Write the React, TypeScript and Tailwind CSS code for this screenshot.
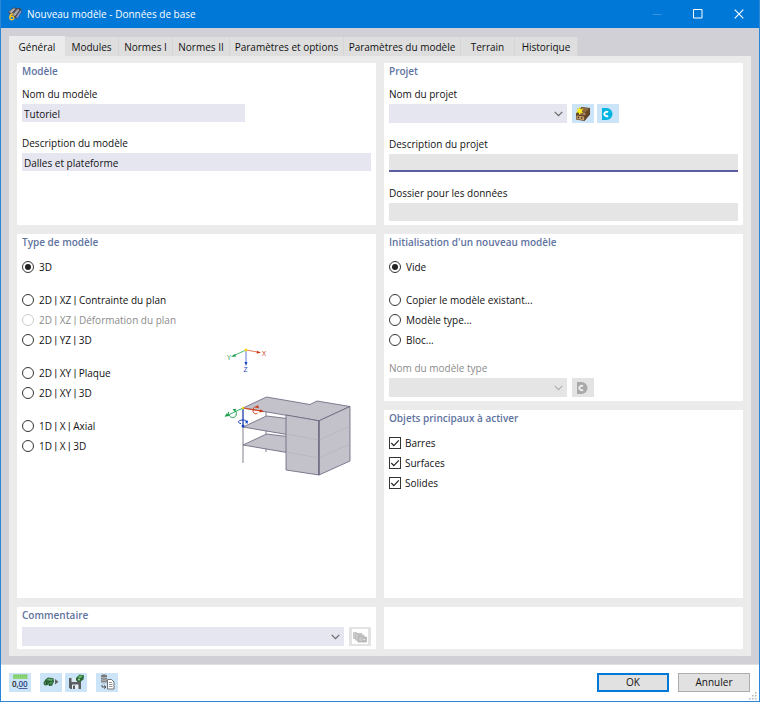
import React from "react";

type Option = { label: string; disabled?: boolean; checked?: boolean };

const tabs = [
  { label: "Général", className: "w-14" },
  { label: "Modules", className: "w-[54px]" },
  { label: "Normes I", className: "w-[54px]" },
  { label: "Normes II", className: "w-[57px]" },
  { label: "Paramètres et options", className: "w-[114px]" },
  { label: "Paramètres du modèle", className: "w-[117px]" },
  { label: "Terrain", className: "w-[54px]" },
  { label: "Historique", className: "w-[63px]" },
];

const modelTypes: Option[][] = [
  [{ label: "3D", checked: true }],
  [
    { label: "2D | XZ | Contrainte du plan" },
    { label: "2D | XZ | Déformation du plan", disabled: true },
    { label: "2D | YZ | 3D" },
  ],
  [{ label: "2D | XY | Plaque" }, { label: "2D | XY | 3D" }],
  [{ label: "1D | X | Axial" }, { label: "1D | X | 3D" }],
];

const initTypes: Option[][] = [
  [{ label: "Vide", checked: true }],
  [{ label: "Copier le modèle existant..." }, { label: "Modèle type..." }, { label: "Bloc..." }],
];

function Card({ title, className = "", children }: { title?: string; className?: string; children?: React.ReactNode }) {
  return (
    <section className={`bg-white px-[5px] ${className}`}>
      {title && <h2 className="mb-[7px] font-semibold leading-4 text-[#5f73a0]">{title}</h2>}
      {children}
    </section>
  );
}

// Roboto has a narrow bar, Open Sans a very wide one
function OptionLabel({ text }: { text: string }) {
  return (
    <span>
      {text.split("|").map((part, index) => (
        <React.Fragment key={index}>
          {index > 0 && <span className="font-['Roboto',sans-serif]">|</span>}
          {part}
        </React.Fragment>
      ))}
    </span>
  );
}

function RadioGroup({ name, groups }: { name: string; groups: Option[][] }) {
  return (
    <div className="flex flex-col gap-[13px]">
      {groups.map((group, index) => (
        <div key={index} className="flex flex-col">
          {group.map((option) => (
            <label
              key={option.label}
              className={`flex h-5 items-center gap-[5px] whitespace-nowrap ${option.disabled ? "text-[#8c8c8c]" : ""}`}
            >
              <input
                type="radio"
                name={name}
                defaultChecked={option.checked}
                disabled={option.disabled}
                className="grid size-3 shrink-0 appearance-none place-items-center rounded-full border border-[#333] bg-white before:size-1.5 before:rounded-full checked:before:bg-[#222] disabled:border-[#ccc]"
              />
              <OptionLabel text={option.label} />
            </label>
          ))}
        </div>
      ))}
    </div>
  );
}

function Combo({ id, label, className = "", disabled }: { id: string; label?: string; className?: string; disabled?: boolean }) {
  return (
    <div className={`relative ${className}`}>
      <select
        id={id}
        aria-label={label}
        disabled={disabled}
        className="block h-[19px] w-full appearance-none bg-[#e6e6f1] px-0.5 outline-none disabled:bg-[#e5e5e5] disabled:opacity-100"
      >
        <option></option>
      </select>
      <svg
        viewBox="0 0 9 6"
        className={`pointer-events-none absolute right-1 top-[7px] h-1.5 w-[9px] ${disabled ? "text-[#b0b0b0]" : "text-[#666]"}`}
      >
        <path d="M.7 .8 4.5 4.6 8.3 .8" fill="none" stroke="currentColor" strokeWidth="1.2" />
      </svg>
    </div>
  );
}

function IconButton({ label, className = "bg-[#cce4f7]", disabled, children }: { label: string; className?: string; disabled?: boolean; children: React.ReactNode }) {
  return (
    <button
      type="button"
      aria-label={label}
      disabled={disabled}
      className={`flex h-[19px] w-[22px] shrink-0 items-center justify-center ${className}`}
    >
      {children}
    </button>
  );
}

function DlubalIcon({ color, notch }: { color: string; notch: string }) {
  return (
    <svg viewBox="0 0 16 16" className="size-4">
      <path d="M2 2H6.500a6 6 0 0 1 0 12H2Z" fill={color} />
      <path d="M8 6.300A2.200 2.200 0 1 0 8 9.700" fill="none" stroke={notch} strokeWidth="1.800" />
    </svg>
  );
}

function AppIcon() {
  return (
    <svg viewBox="0 0 14 14" className="size-3.5">
      <path d="M0 5 5.500 .5l7 .8L14 4.500 9.500 11.500 5 11Z" fill="#4c4a50" />
      <path d="M.8 5 5.500 1.200l2 .5-4 4.500ZM4.500 8l5-6 1.700.4-4.700 6.400Z" fill="#9ca2b1" />
      <path d="m8 10 4.300-6.500 1.200 1L9.500 11.200Z" fill="#7f96c8" />
      <path d="m2.500 6 4-4M6.500 9l4.200-5.800" stroke="#d9cdb8" strokeWidth=".7" />
      <path d="M5.300 7.200C3 6.500 1.700 8.200 1.800 10.500c.1 3 4 2.800 4 .4 0-1.900-2.600-2.200-3.800-.6" fill="none" stroke="#f3c32a" strokeWidth="1.400" />
    </svg>
  );
}

function ProjectIcon() {
  return (
    <svg viewBox="0 0 16 16" className="size-4">
      <path d="M1 7.500 6.500 1l8.500 1v6.500L9.500 15 1 13.500Z" fill="#5a4029" />
      <path d="m6.500 1.600 7.800.8L11 6 4.500 5Z" fill="#8d6c43" />
      <path d="m11 6.500 3.500-3.500v5L10 14v-4Z" fill="#644626" />
      <path d="m1.500 9.500 7.700 1v3.800l-7.700-1.300Z" fill="#c7a26c" />
      <path d="m5 6 5.500.8v2.500L4 8.500Z" fill="#b28b57" />
      <path d="M3.500 10.800v1.500M6.800 11.300v1.500M7.500 7.300v1" stroke="#35251a" strokeWidth="1.300" />
      <path d="m4.500 1 1 2.300 2.600-.6-1.400 2.300L8 7.100l-2.400-.4-1.300 2.200-.6-2.500-2.600.1L3 4.800 1.800 2.500l2.200.7Z" fill="#fff01c" stroke="#d2bf24" strokeWidth=".3" />
    </svg>
  );
}

function LibraryIcon() {
  return (
    <span className="flex h-[15px] w-4 items-center justify-center bg-white">
      <svg viewBox="0 0 14 12" className="h-3 w-3.5">
        <path d="M.5 1.500h3l1 1H9v5H.5Z" fill="#ccc" stroke="#b2b2b2" strokeWidth=".6" />
        <path d="M2.700 3.200h3l1 1H11v5H2.700Z" fill="#d5d5d5" stroke="#aaa" strokeWidth=".6" />
        <path d="M5 5h3l1 1h4.400v5H5Z" fill="#c8c8c8" stroke="#9c9c9c" strokeWidth=".6" />
        <circle cx="11" cy="8.600" r="1.300" fill="#eee" stroke="#999" strokeWidth=".6" />
      </svg>
    </span>
  );
}

function UnitsIcon() {
  return (
    <svg viewBox="0 0 18 16" className="h-4 w-[18px]">
      <path d="M2 .5h14.500v4.500H2Z" fill="#8cd576" />
      <path d="M3.500 .5v2M5.500 .5v1.300M7.500 .5v2M9.500 .5v1.300M11.500 .5v2M13.500 .5v1.300M15.500 .5v2" stroke="#6bb45a" strokeWidth=".6" />
      <text x="1" y="13" fontSize="8" fontWeight="600" fill="#222">0,</text>
      <text x="7.500" y="13" fontSize="8" fontWeight="600" fill="#283f83">00</text>
      <path d="M7.500 14.500h9" stroke="#283f83" strokeWidth=".8" />
    </svg>
  );
}

function ImportIcon() {
  return (
    <svg viewBox="0 0 18 16" className="h-4 w-[18px]">
      <path d="M1.500 8.500 3.500 5.500 6 3.500l5.500.8.5 3.500-2 4-3 .2-.5-1.500-2 1-2.500-.5Z" fill="#2a6236" />
      <path d="m4.500 6 2-1.600 4.500.7L9.500 7ZM2.500 8.500l4 .6v1.400l-3.500-.4Z" fill="#6bad70" />
      <path d="m7.500 8.500 3.500-1.200-.5 2-2.500 1.500Z" fill="#4a9355" />
      <circle cx="4.800" cy="9.500" r=".9" fill="#193f22" />
      <path d="M13 5v5.500L16.500 7.700Z" fill="#666" />
    </svg>
  );
}

function SaveIcon() {
  return (
    <svg viewBox="0 0 18 16" className="h-4 w-[18px]">
      <path d="M2 4h12v11H3.500L2 13.500Z" fill="#5b5f64" />
      <path d="M4.500 4H10v4H4.500Z" fill="#dbeaf5" />
      <path d="M5 10.500h6.500V15H5Z" fill="#e8eef3" />
      <path d="M6 11.500h2V15H6Z" fill="#5b5f64" />
      <path d="m9 4 3.500-3.500 4.500.8-.5 4.200L13 8 9 6.500Z" fill="#2b6936" />
      <path d="m10.500 3.500 2.300-2.300 3 .6L14 4Z" fill="#6bb570" />
      <circle cx="12" cy="5.500" r="1.100" fill="#9ed0a0" />
    </svg>
  );
}

function ReportIcon() {
  return (
    <svg viewBox="0 0 18 16" className="h-4 w-[18px]">
      <path d="M3 1.700C3 .2 9 .2 9 1.700v6.600c0 1.500-6 1.500-6 0Z" fill="#777" />
      <path d="M3 3c0 1.200 6 1.200 6 0M3 5.300c0 1.200 6 1.200 6 0M3 7.600c0 1.200 6 1.200 6 0" fill="none" stroke="#d6e7f3" strokeWidth=".8" />
      <path d="M4 11v2h3.500M6 11.400l2 1.600-2 1.600" fill="none" stroke="#555" />
      <path d="M9.500 5.500h4L16 8v7H9.500Z" fill="#fff" stroke="#666" strokeWidth=".9" />
      <path d="M11 8.500h3M11 10.500h3.500M11 12.500h3.500" stroke="#777" strokeWidth=".8" />
    </svg>
  );
}

function ModelPreview() {
  return (
    <svg viewBox="0 0 150 150" className="mr-1.5 mt-[78px] size-[150px] shrink-0" role="img" aria-label="Aperçu du modèle">
      <g fontSize="7" fontWeight="500">
        <path d="M31 15 18 21" stroke="#4cbb73" />
        <path d="m16 21.800 4-2.800 1 2.400Z" fill="#139a43" />
        <text x="12" y="24.500" fill="#139a43">Y</text>
        <path d="m31 15 13 2.300" stroke="#e27b5f" />
        <path d="m46 17.700-4-2-.4 2.800Z" fill="#cc3512" />
        <text x="47" y="21" fill="#cc3512">X</text>
        <path d="M31 15v13" stroke="#5c7add" />
        <path d="m31 31-1.500-4h3Z" fill="#1741bf" />
        <text x="28.500" y="37" fill="#1741bf">Z</text>
        <circle cx="31" cy="15" r="1.400" fill="#f5d717" />
      </g>
      <path d="M28 73v55M51 62.500V117" stroke="#777381" strokeWidth=".9" />
      <g stroke="#66617a" strokeWidth=".8" strokeLinejoin="round" fill="#c3c2ca">
        <path d="m28 110 23.500-11 83.500 10-31 14Z" />
        <path d="m28 92 23.500-11 83.500 10-31 14Z" />
        <path d="m28 73 23.500-11L95 69.500l7-3.500 33 5.500-31 14.300Z" />
        <path d="m71 80 33 5.800V140l-33-5Z" />
        <path d="m104 85.800 31-14.300V126l-31 14Z" />
      </g>
      <path d="m71 99 33 6 31-14M71 117l33 6 31-14" fill="none" stroke="#aeacb8" strokeWidth=".5" />
      <path d="M104 85.800V140" stroke="#66617a" />
      <path d="M28 73 12 80.500" stroke="#35b264" />
      <path d="m9.500 81.700 2.500-3.700 2 3Z" fill="#139a43" />
      <path d="M13.500 77c-.5 6 6 7 7.500 3.500 1-2.500 0-4.500-2-5.500" fill="none" stroke="#139a43" />
      <path d="m17.500 74.300 3.700-.6-1.200 3Z" fill="#139a43" />
      <path d="m28 73 18 3" stroke="#dd4a24" strokeWidth="1.200" />
      <path d="m49 76.500-4-2.200-.5 3.200Z" fill="#cc3512" />
      <path d="M42 72.500c-2-1.500-4 .5-4 3s2.500 4.500 4.500 2.500" fill="none" stroke="#cc3512" />
      <path d="m40.500 72 2.500-2 1 3.500Z" fill="#cc3512" />
      <path d="M28 73v17" stroke="#3157ca" strokeWidth="1.200" />
      <circle cx="28" cy="91" r="1.500" fill="#1741bf" />
      <path d="M26 88.500c-4-.5-3.500-3.500 2-3.500 4 0 5 2 2.500 3" fill="none" stroke="#1741bf" />
      <path d="m30 86.500 3-1-.5 3.500Z" fill="#1741bf" />
      <circle cx="28" cy="73" r="1.200" fill="#f5d717" />
    </svg>
  );
}

export default function App() {
  return (
    <div className="flex min-h-screen flex-col border border-t-0 border-[#2b86d6] bg-[#d1d0d6] font-['Open_Sans','Noto_Sans',sans-serif] text-[10px] font-medium text-[#111]">
      <header className="flex h-7 items-center bg-[#0078d7] pl-[7px] text-white">
        <AppIcon />
        <h1 className="ml-[5px] grow font-normal">Nouveau modèle - Données de base</h1>
        <div className="flex h-full">
          <button type="button" aria-label="Réduire" disabled className="flex w-10 items-center justify-center">
            <svg viewBox="0 0 10 10" className="size-2.5"><path d="M.5 5.500h9" stroke="#3c93dc" /></svg>
          </button>
          <button type="button" aria-label="Agrandir" className="flex w-[41px] items-center justify-center">
            <svg viewBox="0 0 10 10" className="size-2.5"><path d="M.5 .5h8.500V9H.5Z" fill="none" stroke="#fff" /></svg>
          </button>
          <button type="button" aria-label="Fermer" className="flex w-[41px] items-center justify-center">
            <svg viewBox="0 0 10 10" className="size-2.5"><path d="m.7 .7 8.600 8.600M9.300 .7.7 9.300" stroke="#fff" strokeWidth="1.100" /></svg>
          </button>
        </div>
      </header>

      <div className="flex grow flex-col px-2 pb-2 pt-2">
        <div role="tablist" className="flex items-end">
          {tabs.map((tab, index) => (
            <button
              key={tab.label}
              type="button"
              role="tab"
              aria-selected={index === 0}
              className={`whitespace-nowrap pt-0.5 text-center ${tab.className} ${
                index === 0 ? "h-5 bg-[#ebebeb]" : "h-[19px] border-r border-[#d6d6d8] bg-[#dedede]"
              }`}
            >
              {tab.label}
            </button>
          ))}
        </div>

        <main className="flex grow flex-col gap-[9px] bg-[#ebebeb] px-2 pb-[7px] pt-[7px]">
          <div className="grid grid-cols-2 gap-2">
            <Card title="Modèle" className="pb-1">
              <div className="flex flex-col gap-[13px]">
                <div>
                  <label htmlFor="model-name" className="mb-0.5 block leading-4">Nom du modèle</label>
                  <input id="model-name" defaultValue="Tutoriel" className="block h-[18px] w-[64%] bg-[#e6e6f1] px-0.5 pt-0.5 outline-none" />
                </div>
                <div>
                  <label htmlFor="model-desc" className="mb-0.5 block leading-4">Description du modèle</label>
                  <input id="model-desc" defaultValue="Dalles et plateforme" className="block h-[18px] w-full bg-[#e6e6f1] px-0.5 pt-0.5 outline-none" />
                </div>
              </div>
            </Card>
            <Card title="Projet" className="pb-1">
              <div className="flex flex-col gap-[13px]">
                <div>
                  <label htmlFor="project-name" className="mb-0.5 block leading-4">Nom du projet</label>
                  <div className="flex gap-[3px]">
                    <Combo id="project-name" className="mr-0.5 w-[51%]" />
                    <IconButton label="Nouveau projet"><ProjectIcon /></IconButton>
                    <IconButton label="Dlubal Center"><DlubalIcon color="#00b5e2" notch="#fff" /></IconButton>
                  </div>
                </div>
                <div>
                  <label htmlFor="project-desc" className="mb-0.5 block leading-4">Description du projet</label>
                  <input id="project-desc" readOnly className="block h-[18px] w-full border-b-2 border-[#5c5ca3] bg-[#e5e5e5] px-0.5 outline-none" />
                </div>
                <div>
                  <label htmlFor="data-folder" className="mb-0.5 block leading-4">Dossier pour les données</label>
                  <input id="data-folder" readOnly className="block h-[18px] w-full bg-[#e5e5e5] px-0.5 outline-none" />
                </div>
              </div>
            </Card>
          </div>

          <div className="grid grow grid-cols-2 gap-2">
            <Card title="Type de modèle">
              <div className="flex justify-between">
                <RadioGroup name="model-type" groups={modelTypes} />
                <ModelPreview />
              </div>
            </Card>
            <div className="flex flex-col gap-[9px]">
              <Card title="Initialisation d'un nouveau modèle" className="pb-1">
                <RadioGroup name="init-type" groups={initTypes} />
                <label htmlFor="template-name" className="mb-0.5 mt-2.5 block leading-4 text-[#8c8c8c]">Nom du modèle type</label>
                <div className="flex gap-[5px]">
                  <Combo id="template-name" className="w-[51%]" disabled />
                  <IconButton label="Choisir un modèle type" className="bg-[#e3e3e3]" disabled>
                    <DlubalIcon color="#a9a9a9" notch="#eee" />
                  </IconButton>
                </div>
              </Card>
              <Card title="Objets principaux à activer" className="grow">
                {["Barres", "Surfaces", "Solides"].map((item) => (
                  <label key={item} className="flex h-5 items-center gap-1">
                    <span className="relative flex">
                      <input type="checkbox" defaultChecked className="peer size-3 appearance-none border border-[#333] bg-white" />
                      <svg viewBox="0 0 12 12" className="pointer-events-none absolute inset-0 hidden size-3 peer-checked:block">
                        <path d="m2.300 6 2.500 2.600L9.800 3.400" fill="none" stroke="#222" strokeWidth="1.200" />
                      </svg>
                    </span>
                    {item}
                  </label>
                ))}
              </Card>
            </div>
          </div>

          <div className="grid grid-cols-2 gap-2">
            <Card className="pb-[3px]">
              <h2 className="mb-1 font-semibold leading-4 text-[#5f73a0]">Commentaire</h2>
              <div className="flex gap-[5px]">
                <Combo id="comment" label="Commentaire" className="grow" />
                <IconButton label="Bibliothèque de commentaires" className="bg-[#e3e3e3]" disabled><LibraryIcon /></IconButton>
              </div>
            </Card>
            <Card />
          </div>
        </main>
      </div>

      <footer className="relative flex h-[37px] items-center border-t border-[#e0e0e3] bg-white pb-0.5 pl-2 pr-[9px]">
        <div className="flex grow gap-[3px]">
          <IconButton label="Unités et décimales"><UnitsIcon /></IconButton>
          <span className="w-[3px]" />
          <IconButton label="Charger les paramètres par défaut"><ImportIcon /></IconButton>
          <IconButton label="Enregistrer par défaut"><SaveIcon /></IconButton>
          <span className="w-[3px]" />
          <IconButton label="Copier depuis un modèle"><ReportIcon /></IconButton>
        </div>
        <div className="flex gap-[9px]">
          <button type="button" className="h-[19px] w-[72px] border-2 border-[#0078d7] bg-[#e1e1e1]">OK</button>
          <button type="button" className="h-[19px] w-[72px] border border-[#adadad] bg-[#e1e1e1]">Annuler</button>
        </div>
        <svg viewBox="0 0 8 8" className="absolute bottom-px right-0.5 size-2">
          <path d="M6 0h1.500v1.500H6ZM3 3h1.500v1.500H3ZM6 3h1.500v1.500H6ZM0 6h1.500v1.500H0ZM3 6h1.500v1.500H3ZM6 6h1.500v1.500H6Z" fill="#b5b5b5" />
        </svg>
      </footer>
    </div>
  );
}
